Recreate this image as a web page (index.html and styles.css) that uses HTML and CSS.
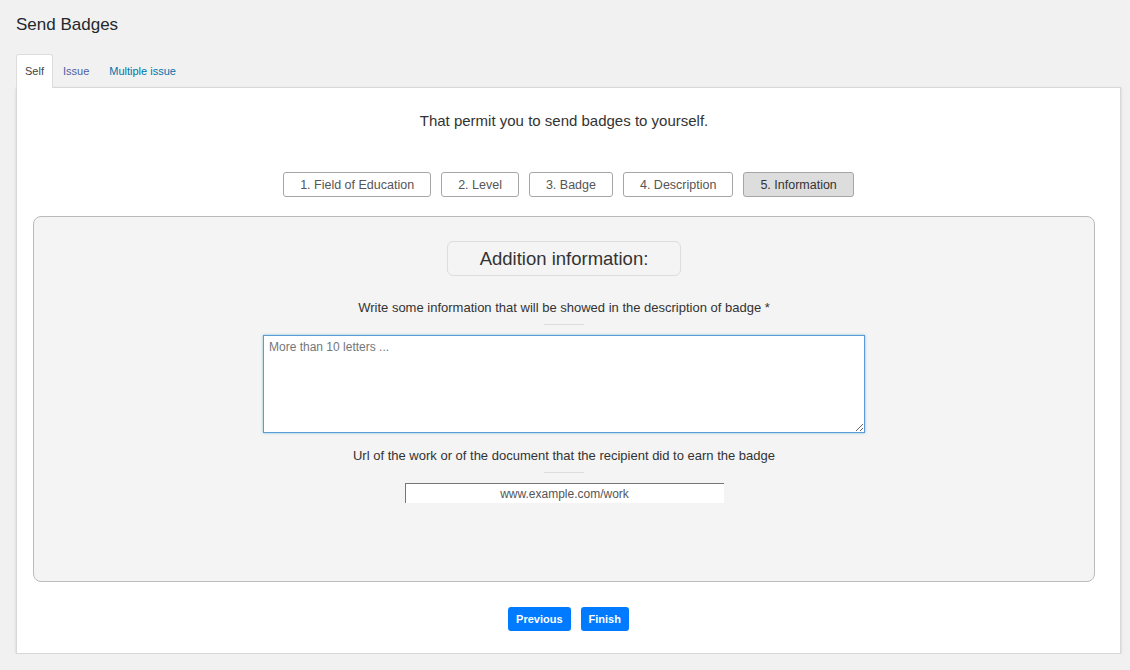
FILE: index.html
```html
<!DOCTYPE html>
<html>
<head>
<meta charset="utf-8">
<link rel="stylesheet" href="styles.css">
</head>
<body>
<div class="wrap">
  <h1 class="title">Send Badges</h1>
  <div class="tabs">
    <a class="tab active">Self</a>
    <a class="tab visited">Issue</a>
    <a class="tab">Multiple issue</a>
  </div>
  <div class="panel">
    <p class="intro">That permit you to send badges to yourself.</p>
    <div class="steps">
      <button class="step">1. Field of Education</button>
      <button class="step">2. Level</button>
      <button class="step">3. Badge</button>
      <button class="step">4. Description</button>
      <button class="step current">5. Information</button>
    </div>
    <div class="box">
      <div class="heading">Addition information:</div>
      <label class="label">Write some information that will be showed in the description of badge *</label>
      <div class="rule"></div>
      <textarea class="area" placeholder="More than 10 letters ..."></textarea>
      <label class="label label-url">Url of the work or of the document that the recipient did to earn the badge</label>
      <div class="rule"></div>
      <input class="url" type="text" placeholder="www.example.com/work">
    </div>
    <div class="actions">
      <button class="btn">Previous</button>
      <button class="btn">Finish</button>
    </div>
  </div>
</div>
</body>
</html>
```

FILE: styles.css
```css
* { box-sizing: border-box; }
html, body {
  margin: 0;
  padding: 0;
  background: #f1f1f1;
  font-family: "Liberation Sans", Arial, sans-serif;
  color: #23282d;
}
.wrap {
  padding: 0 9px 0 16px;
}
.title {
  margin: 0;
  padding-top: 13px;
  font-size: 17px;
  line-height: 23px;
  font-weight: 400;
  color: #23282d;
}
.tabs {
  display: flex;
  margin-top: 18px;
  height: 34px;
  position: relative;
  z-index: 1;
  margin-bottom: -1px;
}
.tab {
  display: block;
  font-size: 11px;
  line-height: 33px;
  padding: 0 9px;
  color: #0073aa;
  border: 1px solid transparent;
  border-bottom: none;
  border-radius: 3px 3px 0 0;
}
.tab.visited { color: #4f5ea0; }
.tab.active {
  padding: 0 8px;
  background: #fff;
  color: #444;
  border-color: #ddd;
  height: 34px;
}
.panel {
  background: #fff;
  border: 1px solid #d8d8d8;
  box-shadow: 0 1px 3px rgba(0,0,0,.13);
  padding: 22px 25px 21px 16px;
  height: 567px;
}
.intro {
  margin: 0;
  text-align: center;
  font-size: 15px;
  line-height: 22px;
  color: #333;
}
.steps {
  display: flex;
  justify-content: center;
  gap: 10px;
  margin-top: 40px;
  margin-right: -9px;
}
.step {
  font-family: "Liberation Sans", Arial, sans-serif;
  font-size: 12.5px;
  height: 25px;
  padding: 0 16px;
  background: #fff;
  color: #555;
  border: 1px solid #a6a6a6;
  border-radius: 3px;
}
.step.current {
  background: #ddd;
  color: #333;
}
.box {
  margin-top: 19px;
  height: 366px;
  background: #f4f4f4;
  border: 1px solid #bbb;
  border-radius: 8px;
  display: flex;
  flex-direction: column;
  align-items: center;
  padding-top: 24px;
}
.heading {
  width: 234px;
  height: 35px;
  border: 1px solid #ddd;
  border-radius: 6px;
  font-size: 18.5px;
  line-height: 33px;
  text-align: center;
  color: #333;
}
.label {
  display: block;
  margin-top: 24px;
  font-size: 13px;
  line-height: 16px;
  color: #333;
}
.label-url { margin-top: 15px; }
.rule {
  width: 40px;
  height: 1px;
  background: #ddd;
  margin-top: 8px;
}
.area {
  display: block;
  margin-top: 10px;
  width: 602px;
  height: 98px;
  border: 1px solid #5b9dd9;
  box-shadow: 0 0 2px rgba(30,140,190,.6);
  padding: 4px 5px;
  font-family: "Liberation Sans", Arial, sans-serif;
  font-size: 12px;
  background: #fff;
  outline: none;
}
.area::placeholder { color: #72777c; }
.url {
  display: block;
  margin-top: 10px;
  width: 319px;
  height: 20px;
  border: none;
  border-top: 1px solid #767676;
  border-left: 1px solid #767676;
  background: #fff;
  text-align: center;
  font-family: "Liberation Sans", Arial, sans-serif;
  font-size: 12px;
  padding: 0;
  outline: none;
}
.url::placeholder { color: #555; }
.actions {
  display: flex;
  justify-content: center;
  gap: 10px;
  margin-top: 25px;
  margin-right: -9px;
}
.btn {
  font-family: "Liberation Sans", Arial, sans-serif;
  font-size: 11px;
  font-weight: 700;
  color: #fff;
  background: #007bff;
  border: none;
  border-radius: 3px;
  height: 24px;
  padding: 0 8px;
}
```
